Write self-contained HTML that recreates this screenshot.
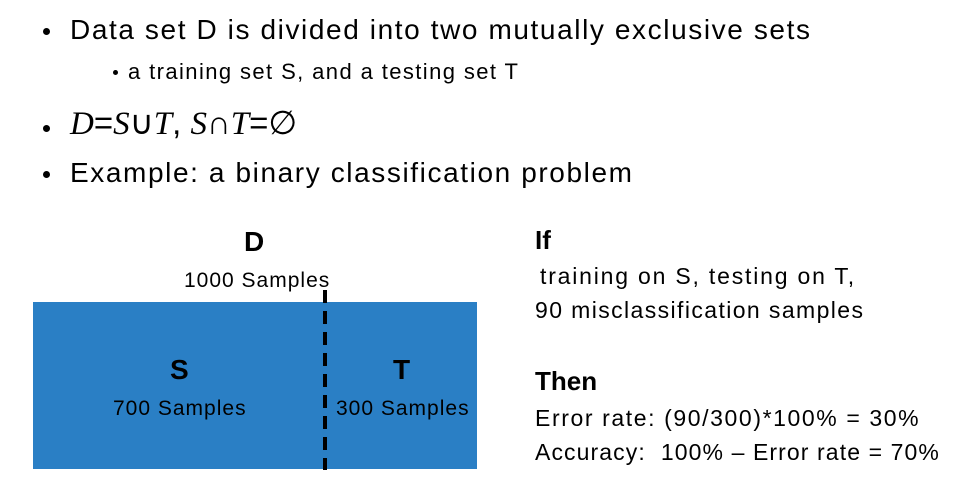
<!DOCTYPE html>
<html><head><meta charset="utf-8"><style>
body{margin:0;width:966px;height:499px;background:#fff;position:relative;overflow:hidden;font-family:"Liberation Sans",sans-serif;color:#000}
.a{position:absolute;white-space:nowrap;line-height:1}
.b{position:absolute;width:7px;height:7px;border-radius:50%;background:#000}
.m{font-family:"Liberation Serif",serif;font-style:italic}
.s{font-size:21px;letter-spacing:1px}
.r{font-size:23px;letter-spacing:1.4px}
</style></head><body>
<div class="b" style="left:43px;top:28px"></div>
<div class="a" style="left:70px;top:16px;font-size:28px;letter-spacing:1.6px">Data set D is divided into two mutually exclusive sets</div>
<div class="b" style="left:113px;top:70px;width:5px;height:5px"></div>
<div class="a" style="left:128px;top:61px;font-size:22px;letter-spacing:1.4px">a training set S, and a testing set T</div>
<div class="b" style="left:43px;top:125px"></div>
<div class="a" style="left:70px;top:106px;font-size:33px"><span class="m">D</span>=<span class="m">S</span>∪<span class="m">T</span>, <span class="m">S</span>∩<span class="m">T</span>=∅</div>
<div class="b" style="left:43px;top:171px"></div>
<div class="a" style="left:70px;top:159px;font-size:28px;letter-spacing:1.6px">Example: a binary classification problem</div>

<div class="a" style="left:244px;top:228px;font-size:28px;font-weight:bold">D</div>
<div class="a s" style="left:184px;top:270px">1000 Samples</div>
<div style="position:absolute;left:33px;top:302px;width:444px;height:167px;background:#2a7fc5"></div>
<div style="position:absolute;left:323px;top:290px;width:4px;height:180px;background:repeating-linear-gradient(#000 0 13px,transparent 13px 21px)"></div>
<div class="a" style="left:170px;top:356px;font-size:28px;font-weight:bold">S</div>
<div class="a s" style="left:113px;top:398px">700 Samples</div>
<div class="a" style="left:393px;top:356px;font-size:28px;font-weight:bold">T</div>
<div class="a s" style="left:336px;top:398px">300 Samples</div>

<div class="a" style="left:535px;top:227px;font-size:26px;font-weight:bold">If</div>
<div class="a r" style="left:540px;top:265px;letter-spacing:1.8px">training on S, testing on T,</div>
<div class="a r" style="left:535px;top:299px">90 misclassification samples</div>
<div class="a" style="left:535px;top:368px;font-size:26px;font-weight:bold">Then</div>
<div class="a r" style="left:535px;top:407px;letter-spacing:1.6px">Error rate: (90/300)*100% = 30%</div>
<div class="a r" style="left:535px;top:441px;letter-spacing:1.1px">Accuracy:&nbsp; 100% – Error rate = 70%</div>
</body></html>
